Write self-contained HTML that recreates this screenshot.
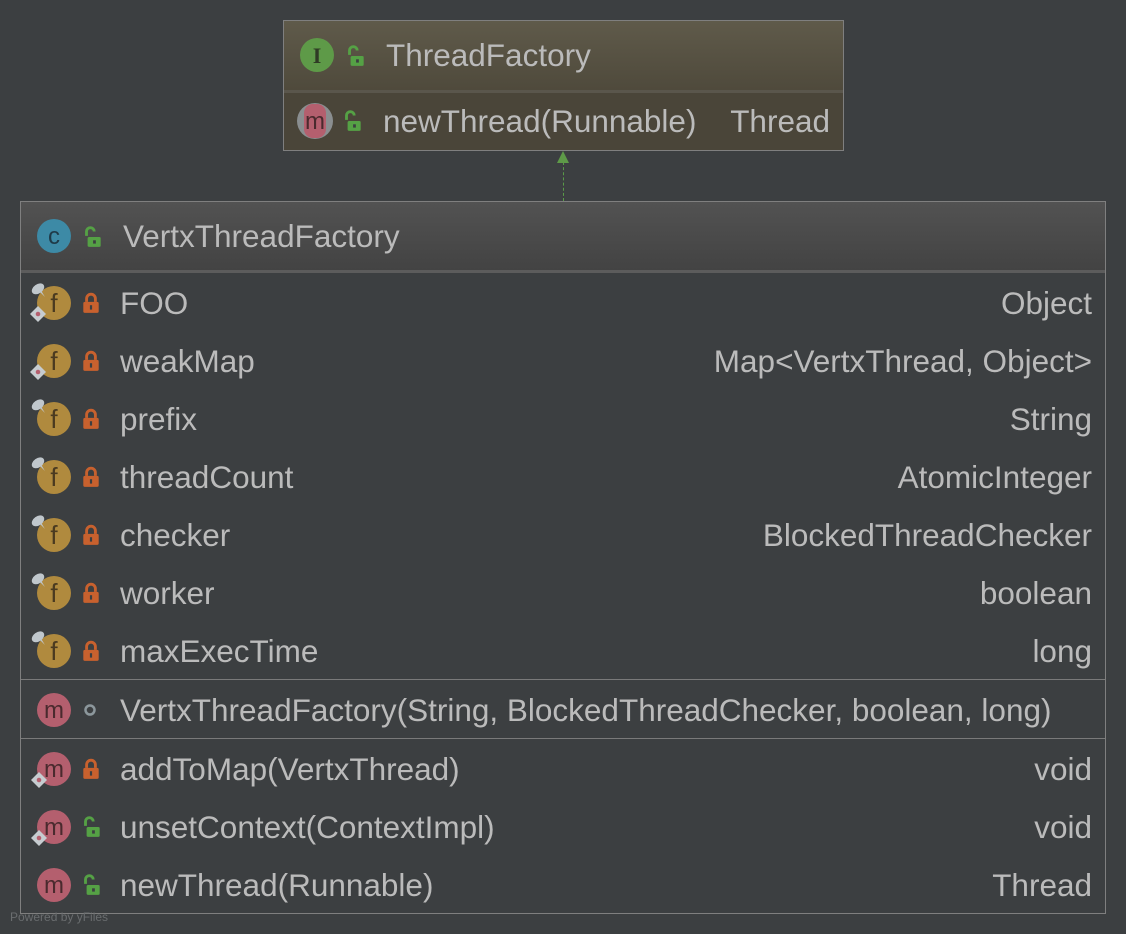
<!DOCTYPE html>
<html><head><style>
body{margin:0;width:1126px;height:934px;background:#3c3f41;position:relative;overflow:hidden;font-family:"Liberation Sans","DejaVu Sans",sans-serif;color:#bbbbbb}
.box{position:absolute;box-sizing:border-box;border:1px solid #7f7f7f}
.row{position:absolute;left:0;right:0;height:58px;font-size:31.5px}
.row .ic{position:absolute;left:16px;top:12px;width:34px;height:34px}
.row .lk{position:absolute;left:61px;top:18px;width:18px;height:22px}
.row .n{position:absolute;left:99px;top:0;line-height:58px;white-space:nowrap}
.row .t{position:absolute;right:13px;top:0;line-height:58px;white-space:nowrap}
.sep{position:absolute;left:0;right:0;height:1px;background:#7a7a7a}
</style></head><body>
<svg width="0" height="0" style="position:absolute">
<defs>
<symbol id="f" viewBox="0 0 34 34"><circle cx="17" cy="17" r="17" fill="#b08a3e"/><text x="17" y="26" font-size="26" text-anchor="middle" fill="#4a3a20" font-family="Liberation Sans, sans-serif">f</text></symbol>
<symbol id="m" viewBox="0 0 34 34"><circle cx="17" cy="17" r="17" fill="#b45f6e"/><text x="17" y="25" font-size="24" text-anchor="middle" fill="#4a2a2e" font-family="Liberation Sans, sans-serif">m</text></symbol>
<symbol id="pin" viewBox="0 0 14 14"><ellipse cx="7" cy="6" rx="6" ry="4" transform="rotate(-35 7 6)" fill="#c0c7cc"/><path d="M8 8 L13 13 L10 8Z" fill="#c0c7cc"/></symbol>
<symbol id="dia" viewBox="0 0 14 14"><path d="M7 0 L14 7 L7 14 L0 7Z" fill="#c6ccd0"/><circle cx="7" cy="7" r="2" fill="#b45f6e"/></symbol>
<symbol id="lockr" viewBox="0 0 16 20"><path d="M4 9 V6 a4 4 0 0 1 8 0 V9" fill="none" stroke="#c8612e" stroke-width="2.6"/><rect x="1" y="9" width="14" height="10" rx="1.5" fill="#c8612e"/><rect x="7" y="12" width="2" height="4" fill="#3c3f41"/></symbol>
<symbol id="lockg" viewBox="0 0 16 20"><path d="M3 9 V5 a3.5 3.5 0 0 1 7 0" fill="none" stroke="#55a145" stroke-width="2.6"/><rect x="4" y="10" width="12" height="9" rx="1.5" fill="#55a145"/><rect x="9" y="13" width="2.5" height="3" fill="#3c3f41"/></symbol>
</defs></svg>

<div class="box" style="left:283px;top:20px;width:561px;height:131px;background:#4a4539">
 <div style="position:absolute;left:0;right:0;top:0;height:69px;background:linear-gradient(#5f5a4a,#4f4a3c)"></div>
 <div style="position:absolute;left:0;right:0;top:69px;height:3px;background:#5a564c"></div>
 <svg style="position:absolute;left:16px;top:17px" width="34" height="34"><circle cx="17" cy="17" r="17" fill="#5e9a48"/><text x="17" y="25" font-size="22" font-weight="bold" text-anchor="middle" fill="#2f3b25" font-family="Liberation Serif, serif">I</text></svg>
 <svg style="position:absolute;left:62px;top:24px" width="18" height="22" viewBox="0 0 16 20"><use href="#lockg"/></svg>
 <div style="position:absolute;left:102px;top:0;line-height:69px;font-size:31.5px">ThreadFactory</div>
 <div class="row" style="top:71px">
  <svg class="ic" style="left:12px;top:10px;width:38px;height:38px" viewBox="0 0 38 38"><circle cx="19" cy="19" r="18" fill="#8a8e90"/><rect x="8" y="2" width="22" height="34" rx="9" fill="#b45f6e"/><text x="19" y="27" font-size="24" text-anchor="middle" fill="#4a2a2e" font-family="Liberation Sans, sans-serif">m</text></svg>
  <svg class="lk" style="left:59px" viewBox="0 0 16 20"><use href="#lockg"/></svg>
  <div class="n">newThread(Runnable)</div>
  <div class="t">Thread</div>
 </div>
</div>
<div style="position:absolute;left:563px;top:162px;width:0;height:39px;border-left:1px dashed #5a9a48"></div>
<div style="position:absolute;left:557px;top:151px;width:0;height:0;border-left:6px solid transparent;border-right:6px solid transparent;border-bottom:12px solid #5e9a48"></div>

<div class="box" style="left:20px;top:201px;width:1086px;height:713px">
 <div style="position:absolute;left:0;right:0;top:0;height:68px;background:linear-gradient(#525252,#434343)"></div>
 <div style="position:absolute;left:0;right:0;top:68px;height:3px;background:#5c5c5c"></div>
 <svg style="position:absolute;left:16px;top:17px" width="34" height="34"><circle cx="17" cy="17" r="17" fill="#3d8aa6"/><text x="17" y="25" font-size="24" text-anchor="middle" fill="#1f3a48" font-family="Liberation Sans, sans-serif">c</text></svg>
 <svg style="position:absolute;left:62px;top:24px" width="18" height="22" viewBox="0 0 16 20"><use href="#lockg"/></svg>
 <div style="position:absolute;left:102px;top:0;line-height:68px;font-size:31.5px">VertxThreadFactory</div>

 <div class="row" style="top:72px"><svg class="ic"><use href="#f"/></svg><svg style="position:absolute;left:9px;top:8px" width="16" height="16"><use href="#pin"/></svg><svg style="position:absolute;left:9px;top:32px" width="16" height="16"><use href="#dia"/></svg><svg class="lk" viewBox="0 0 16 20"><use href="#lockr"/></svg><div class="n">FOO</div><div class="t">Object</div></div>
 <div class="row" style="top:130px"><svg class="ic"><use href="#f"/></svg><svg style="position:absolute;left:9px;top:32px" width="16" height="16"><use href="#dia"/></svg><svg class="lk" viewBox="0 0 16 20"><use href="#lockr"/></svg><div class="n">weakMap</div><div class="t">Map&lt;VertxThread, Object&gt;</div></div>
 <div class="row" style="top:188px"><svg class="ic"><use href="#f"/></svg><svg style="position:absolute;left:9px;top:8px" width="16" height="16"><use href="#pin"/></svg><svg class="lk" viewBox="0 0 16 20"><use href="#lockr"/></svg><div class="n">prefix</div><div class="t">String</div></div>
 <div class="row" style="top:246px"><svg class="ic"><use href="#f"/></svg><svg style="position:absolute;left:9px;top:8px" width="16" height="16"><use href="#pin"/></svg><svg class="lk" viewBox="0 0 16 20"><use href="#lockr"/></svg><div class="n">threadCount</div><div class="t">AtomicInteger</div></div>
 <div class="row" style="top:304px"><svg class="ic"><use href="#f"/></svg><svg style="position:absolute;left:9px;top:8px" width="16" height="16"><use href="#pin"/></svg><svg class="lk" viewBox="0 0 16 20"><use href="#lockr"/></svg><div class="n">checker</div><div class="t">BlockedThreadChecker</div></div>
 <div class="row" style="top:362px"><svg class="ic"><use href="#f"/></svg><svg style="position:absolute;left:9px;top:8px" width="16" height="16"><use href="#pin"/></svg><svg class="lk" viewBox="0 0 16 20"><use href="#lockr"/></svg><div class="n">worker</div><div class="t">boolean</div></div>
 <div class="row" style="top:420px"><svg class="ic"><use href="#f"/></svg><svg style="position:absolute;left:9px;top:8px" width="16" height="16"><use href="#pin"/></svg><svg class="lk" viewBox="0 0 16 20"><use href="#lockr"/></svg><div class="n">maxExecTime</div><div class="t">long</div></div>
 <div class="sep" style="top:477px"></div>
 <div class="row" style="top:479px"><svg class="ic"><use href="#m"/></svg><svg style="position:absolute;left:63px;top:23px" width="12" height="12"><circle cx="6" cy="6" r="4.5" fill="none" stroke="#8c979c" stroke-width="2.5"/></svg><div class="n">VertxThreadFactory(String, BlockedThreadChecker, boolean, long)</div></div>
 <div class="sep" style="top:536px"></div>
 <div class="row" style="top:538px"><svg class="ic"><use href="#m"/></svg><svg style="position:absolute;left:10px;top:32px" width="16" height="16"><use href="#dia"/></svg><svg class="lk" viewBox="0 0 16 20"><use href="#lockr"/></svg><div class="n">addToMap(VertxThread)</div><div class="t">void</div></div>
 <div class="row" style="top:596px"><svg class="ic"><use href="#m"/></svg><svg style="position:absolute;left:10px;top:32px" width="16" height="16"><use href="#dia"/></svg><svg class="lk" viewBox="0 0 16 20"><use href="#lockg"/></svg><div class="n">unsetContext(ContextImpl)</div><div class="t">void</div></div>
 <div class="row" style="top:654px"><svg class="ic"><use href="#m"/></svg><svg class="lk" viewBox="0 0 16 20"><use href="#lockg"/></svg><div class="n">newThread(Runnable)</div><div class="t">Thread</div></div>
</div>
<div style="position:absolute;left:10px;top:910px;font-size:12px;color:#6a6d6f">Powered by yFiles</div>
</body></html>
